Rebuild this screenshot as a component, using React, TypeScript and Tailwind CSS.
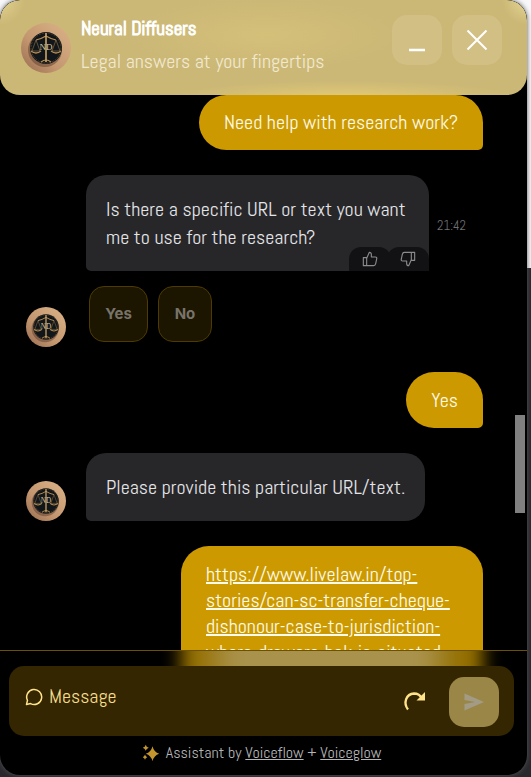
import type { ReactNode } from 'react';

const FONT = "font-['Abel','Liberation_Sans_Narrow','Roboto_Condensed',sans-serif]";

function Avatar({ className }: { className: string }) {
  return (
    <svg viewBox="0 0 50 50" className={`shrink-0 rounded-full ${className}`} role="img" aria-label="Neural Diffusers logo">
      <defs>
        <linearGradient id="skin" x1="1" y1="0" x2="0" y2="1">
          <stop offset="0" stopColor="#dcb488" />
          <stop offset="0.6" stopColor="#c3966f" />
          <stop offset="1" stopColor="#96694f" />
        </linearGradient>
      </defs>
      <rect width="50" height="50" fill="url(#skin)" />
      <circle cx="24" cy="27" r="17" fill="#5c3d2b" opacity="0.5" />
      <circle cx="25" cy="25" r="16" fill="#11161b" />
      <circle cx="25" cy="25" r="15" fill="none" stroke="#4d3f29" strokeWidth="1" strokeDasharray="2 1" />
      <g fill="none" stroke="#b58c50">
        <path d="M15 17q5-1 10-4 5 3 10 4M20 39q5-4 10 0" strokeWidth="1.2" />
        <path d="M25 10v29" stroke="#d9ae6b" strokeWidth="1.5" />
        <path d="M15 17l-4 11h8zM35 17l-4 11h8z" strokeWidth="0.5" />
        <path d="M10 28q5 4 10 0M30 28q5 4 10 0" strokeWidth="1.3" />
      </g>
      <text x="25" y="27" textAnchor="middle" fontSize="9" fill="#d6c39a" fontFamily="Liberation Serif, serif">ND</text>
    </svg>
  );
}

function ThumbIcon({ className }: { className: string }) {
  return (
    <svg viewBox="0 0 24 24" className={`size-4 ${className}`} fill="none" stroke="#8b8b8e" strokeWidth="1.7" strokeLinejoin="round">
      <path d="M2 10h5v12H2zM7 11l4-9c2 0 3 1 3 3v4h6c2 0 2.500 1 2 3l-1.500 7c-.4 2-1 3-3 3H7" />
    </svg>
  );
}

function BotBubble({ children, className }: { children: ReactNode; className: string }) {
  return (
    <div className={`relative overflow-hidden rounded-t-[20px] bg-[#27272a] p-5 text-[#e4e4e7] ${className}`}>
      {children}
    </div>
  );
}

function UserBubble({ children, className }: { children: ReactNode; className: string }) {
  return (
    <div className={`shrink-0 self-end rounded-[28px] rounded-br-[5px] bg-[#cc9a00] px-[25px] text-[#fffbeb] ${className}`}>
      {children}
    </div>
  );
}

export default function App() {
  return (
    <div className={`relative h-screen overflow-hidden bg-[linear-gradient(to_bottom,#f8f8fa_268px,#29282c_268px)] pr-1 pb-0.5 text-[20px] leading-7 ${FONT}`}>
      <div className="relative flex h-full flex-col overflow-hidden rounded-[20px] bg-black shadow-[0_0_5px_#55555a]">
        <header className="flex h-[95px] shrink-0 items-start rounded-[20px] bg-[#cbb776] bg-[radial-gradient(ellipse_180px_18px_at_345px_98px,#e2ca76,transparent),radial-gradient(ellipse_150px_40px_at_265px_35px,#d4c079,transparent),radial-gradient(circle_at_0_0,#e2d18d,transparent_25px),radial-gradient(circle_at_100%_0,#e5d695,transparent_25px)] pl-[21px] pr-[25px]">
          <Avatar className="mt-[23px] size-[50px]" />
          <div className="ml-2.5 mt-3 flex-1 whitespace-nowrap">
            <h1 className="text-[19px] leading-[33px] text-white [-webkit-text-stroke:1px_white]">Neural Diffusers</h1>
            <p className="leading-8 text-[#f1e9cf]">Legal answers at your fingertips</p>
          </div>
          <div className="mt-[15px] flex gap-2.5">
            <button aria-label="Minimize" className="flex size-[50px] items-center justify-center rounded-[15px] bg-[#d2bf84]">
              <svg viewBox="0 0 24 24" className="size-6" stroke="#fff" strokeWidth="2.4"><path d="M4 22h16" /></svg>
            </button>
            <button aria-label="Close" className="flex size-[50px] items-center justify-center rounded-[15px] bg-[#d2bf84]">
              <svg viewBox="0 0 24 24" className="size-6" stroke="#fff" strokeWidth="2"><path d="M2.500 2.500l19 19M21.500 2.500l-19 19" /></svg>
            </button>
          </div>
        </header>

        <main className="flex min-h-0 flex-1 flex-col overflow-hidden pl-[26px] pr-11">
          <UserBubble className="pt-[13px] pb-3.5">
            <p>Need help with research work?</p>
          </UserBubble>

          <div className="mt-[25px] flex shrink-0 items-center gap-2 pl-[60px]">
            <BotBubble className="w-[343px] rounded-bl-[5px]">
              <p>Is there a specific URL or text you want me to use for the research?</p>
              <div className="absolute bottom-0 right-0 flex h-6 w-20">
                <button aria-label="Helpful" className="flex flex-1 items-center justify-center rounded-t-[12px] bg-[#121214]">
                  <ThumbIcon className="" />
                </button>
                <button aria-label="Not helpful" className="-ml-1 flex flex-1 items-center justify-center rounded-t-[12px] bg-[#121214]">
                  <ThumbIcon className="rotate-180" />
                </button>
              </div>
            </BotBubble>
            <time className="pt-1.5 text-[13px] leading-5 text-[#6f6f73]">21:42</time>
          </div>

          <div className="mt-[15px] flex h-[61px] shrink-0 items-start">
            <Avatar className="size-10 self-end" />
            <div className="ml-[23px] flex gap-2.5 font-['Inter',sans-serif] text-[15px] font-bold text-[#77736a]">
              <button className="h-14 w-[59px] rounded-[15px] border border-[#4f3b00] bg-[#1c1500]">Yes</button>
              <button className="h-14 w-[54px] rounded-[15px] border border-[#4f3b00] bg-[#1c1500]">No</button>
            </div>
          </div>

          <UserBubble className="mt-[25px] py-3.5">
            <p>Yes</p>
          </UserBubble>

          <div className="mt-[25px] flex shrink-0 items-end gap-5">
            <Avatar className="size-10" />
            <BotBubble className="rounded-br-[20px] rounded-bl-[5px]">
              <p>Please provide this particular URL/text.</p>
            </BotBubble>
          </div>

          <UserBubble className="mt-[25px] w-[302px] py-[15px] leading-[26px]">
            <a className="underline decoration-2" href="#article">
              https://www.livelaw.in/top-<wbr />stories/can-sc-transfer-cheque-<wbr />dishonour-case-to-jurisdiction-<wbr />where-drawers-bok-is-situated
            </a>
          </UserBubble>
        </main>

        <footer className="relative h-[125px] shrink-0 overflow-hidden border-t border-[#6b5100] pl-[9px] pr-[13px] pt-[15px]">
          <div className="absolute -top-5 right-11 h-[78px] w-[302px] bg-[linear-gradient(to_right,#946f00_5%,#a9924c_18%,#a9924c_80%,#946f00_92%)] blur-[9px]" />
          <form className="relative flex h-[70px] items-center rounded-[15px] bg-[#332600] pl-4 pr-[15px]">
            <svg viewBox="0 0 24 24" className="-mt-2 size-[18px] shrink-0" fill="none" stroke="#ffe28a" strokeWidth="2" strokeLinejoin="round"><path d="M2 22l1.300-5.500A10 10 0 1 1 7.500 20.800z" /></svg>
            <input aria-label="Message" placeholder="Message" className="-mt-2.5 ml-1.5 min-w-0 flex-1 bg-transparent outline-none placeholder:text-[#f5dc8c]" />
            <button type="button" aria-label="Restart" className="mr-[23px] flex size-6 items-center justify-center">
              <svg viewBox="0 0 24 24" className="size-6" fill="none"><path d="M6 20.500C1 14 4 5 12 4.500c4 0 6.500 2 8 5" stroke="#ffe28a" strokeWidth="2.300" /><path d="M23 3v8.500h-8.500z" fill="#ffe28a" /></svg>
            </button>
            <button type="button" aria-label="Send" className="mt-0.5 flex size-[50px] items-center justify-center rounded-[15px] bg-[#9a8748]">
              <svg viewBox="0 0 24 24" className="size-6" fill="#a39b84"><path d="M2.500 3.500L22 12 2.500 20.500v-6.500L13 12 2.500 10z" /></svg>
            </button>
          </form>
          <p className="relative mt-[5px] flex items-center justify-center text-[16px] leading-6 text-[#b5b5b7]">
            <svg viewBox="0 0 24 24" className="mr-1.5 size-[18px]" fill="#c4942f"><path d="M14 3q2 8 9 10-7 2-9 10-2-8-9-10 7-2 9-10zM5 1q.7 3 4 4-3.300 1-4 4-.7-3-4-4 3.300-1 4-4zM4 14q.6 2.500 3 3.500-2.400 1-3 3.500-.6-2.500-3-3.500 2.400-1 3-3.500z" /></svg>
            <span>Assistant by <a href="#voiceflow" className="underline">Voiceflow</a> + <a href="#voiceglow" className="underline">Voiceglow</a></span>
          </p>
        </footer>
        <div className="absolute right-0.5 top-[415px] h-[98px] w-2.5 bg-[#808080]" />
      </div>
    </div>
  );
}
